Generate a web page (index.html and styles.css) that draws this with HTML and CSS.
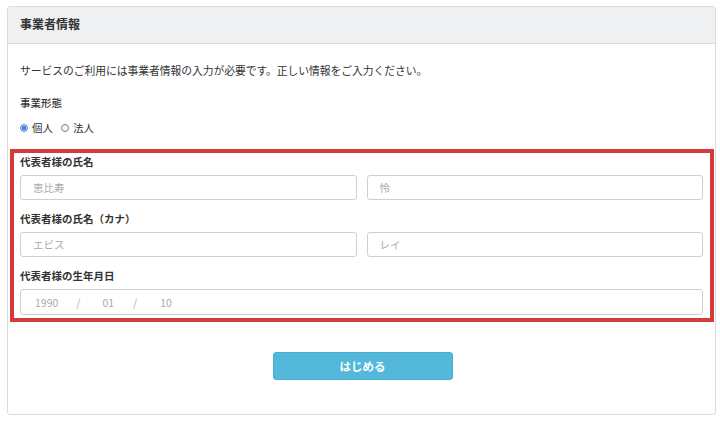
FILE: index.html
```html
<!DOCTYPE html>
<html lang="ja">
<head>
<meta charset="utf-8">
<link rel="stylesheet" href="styles.css">
</head>
<body>
<div class="card">
  <div class="card-header">事業者情報</div>
  <div class="card-body">
    <p class="desc">サービスのご利用には事業者情報の入力が必要です。正しい情報をご入力ください。</p>
    <div class="field-label plain">事業形態</div>
    <div class="radios">
      <label class="radio"><span class="dot checked"></span>個人</label>
      <label class="radio"><span class="dot"></span>法人</label>
    </div>
    <div class="highlight">
      <div class="field-label">代表者様の氏名</div>
      <div class="row">
        <div class="input"><span class="ph">恵比寿</span></div>
        <div class="input"><span class="ph">怜</span></div>
      </div>
      <div class="field-label">代表者様の氏名（カナ）</div>
      <div class="row">
        <div class="input"><span class="ph">エビス</span></div>
        <div class="input"><span class="ph">レイ</span></div>
      </div>
      <div class="field-label">代表者様の生年月日</div>
      <div class="row">
        <div class="input date">
          <span class="ph y">1990</span><span class="ph sep">/</span><span class="ph m">01</span><span class="ph sep">/</span><span class="ph d">10</span>
        </div>
      </div>
    </div>
    <div class="actions">
      <button class="btn">はじめる</button>
    </div>
  </div>
</div>
</body>
</html>
```

FILE: styles.css
```css
* { box-sizing: border-box; }
html, body { margin: 0; padding: 0; background: #fff; }
body {
  font-family: "Noto Sans CJK JP", "Noto Sans", sans-serif;
  color: #333;
  width: 720px;
  height: 421px;
  overflow: hidden;
}
.card {
  margin: 6px 0 0 7px;
  width: 709px;
  height: 409px;
  border: 1px solid #dcdcdc;
  border-radius: 3px;
  overflow: hidden;
}
.card-header {
  height: 37px;
  background: #eef0f2;
  border-bottom: 1px solid #dcdcdc;
  padding-left: 12px;
  font-size: 12px;
  font-weight: 700;
  line-height: 34px;
  color: #333;
}
.card-body {
  padding: 18px 0 0 0;
}
.desc {
  margin: 0 0 17px 12px;
  font-size: 10.8px;
  line-height: 16px;
  letter-spacing: -0.05px;
}
.field-label {
  font-size: 10.5px;
  font-weight: 700;
  line-height: 16px;
}
.field-label.plain {
  margin-left: 12px;
  font-weight: 500;
}
.radios {
  display: flex;
  gap: 8px;
  margin: 9px 0 0 12px;
  font-size: 10.5px;
  line-height: 16px;
}
.radio {
  display: flex;
  align-items: center;
  gap: 4px;
}
.dot {
  width: 8px;
  height: 8px;
  border-radius: 50%;
  border: 1px solid #777;
  background: #fff;
  display: inline-block;
}
.dot.checked {
  border: 1px solid #3b7fd9;
  background: radial-gradient(circle, #3b7fd9 0 2.2px, #fff 2.6px);
}
.highlight {
  margin: 13px 0 0 2px;
  width: 704px;
  border: 4px solid #d53a3a;
  padding: 1px 7px 3px 6px;
}
.highlight .field-label { margin-top: 11px; }
.highlight .field-label:first-child { margin-top: 0; }
.row {
  display: flex;
  gap: 10px;
  margin-top: 5px;
}
.input {
  flex: 1;
  height: 25px;
  border: 1px solid #cfcfcf;
  border-radius: 3px;
  padding-left: 12px;
  display: flex;
  align-items: center;
  font-size: 10.5px;
}
.ph { color: #aaa; }
.input.date { height: 26px; padding-left: 14px; }
.date .sep { margin: 0 22px 0 18px; }
.date .sep + .m + .sep { margin: 0 23px 0 19px; }
.actions {
  display: flex;
  justify-content: center;
  margin-top: 30px;
  padding-left: 2px;
}
.btn {
  width: 180px;
  height: 28px;
  background: #53b8da;
  border: 1px solid #4aaecf;
  border-radius: 3px;
  color: #fff;
  font-family: "Noto Sans CJK JP", sans-serif;
  font-size: 11.5px;
  font-weight: 700;
  padding: 0;
}
```
